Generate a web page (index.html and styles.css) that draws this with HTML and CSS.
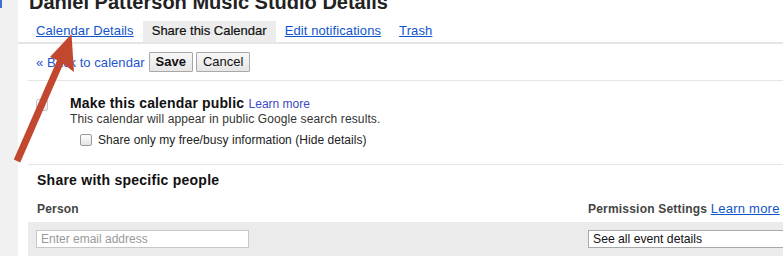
FILE: index.html
```html
<!DOCTYPE html>
<html>
<head>
<meta charset="utf-8">
<link rel="stylesheet" href="styles.css">
</head>
<body>
<div class="page">
  <div class="sidebar"><div class="sidebar-mark"></div></div>
  <div class="main">
    <h1 class="title">Daniel Patterson Music Studio Details</h1>
    <div class="tabs">
      <a class="tab" href="#">Calendar Details</a>
      <span class="tab tab-active">Share this Calendar</span>
      <a class="tab" href="#">Edit notifications</a>
      <a class="tab" href="#">Trash</a>
    </div>
    <div class="actions">
      <a class="back" href="#">« Back to calendar</a>
      <button class="btn btn-save">Save</button>
      <button class="btn">Cancel</button>
    </div>
    <div class="public">
      <input type="checkbox" class="cb cb-disabled" disabled>
      <div class="public-text">
        <div class="public-title"><span class="strong">Make this calendar public</span> <a class="learn" href="#">Learn more</a></div>
        <div class="public-desc">This calendar will appear in public Google search results.</div>
        <label class="freebusy"><input type="checkbox" class="cb"><span>Share only my free/busy information (Hide details)</span></label>
      </div>
    </div>
    <div class="people">
      <div class="people-title">Share with specific people</div>
      <div class="grid grid-head">
        <div class="col-label">Person</div>
        <div class="col-label">Permission Settings <a class="learn2" href="#">Learn more</a></div>
      </div>
      <div class="grid grid-row">
        <div><input class="email" type="text" placeholder="Enter email address"></div>
        <div><div class="select">See all event details</div></div>
      </div>
    </div>
  </div>
</div>
<svg class="arrow" width="783" height="256" viewBox="0 0 783 256">
  <line x1="17" y1="161" x2="62" y2="58" stroke="#c1472f" stroke-width="7"/>
  <polygon points="71.5,34 74,72 61,62 50,57" fill="#c1472f"/>
</svg>
</body>
</html>
```
FILE: styles.css
```css
html, body {
  margin: 0;
  padding: 0;
  background: #fff;
  overflow: hidden;
}
body {
  width: 783px;
  height: 256px;
  position: relative;
  font-family: "Liberation Sans", Arial, sans-serif;
  color: #222;
}
.page {
  display: flex;
  min-height: 256px;
}
.sidebar {
  width: 18px;
  flex: none;
  background: #f1f1f1;
}
.sidebar-mark {
  width: 2px;
  height: 8px;
  background: #3b6fd4;
}
.main {
  flex: 1;
  min-width: 0;
}
.title {
  margin: -8px 0 9px 11px;
  font-size: 20px;
  line-height: 20px;
  font-weight: bold;
  color: #222;
  white-space: nowrap;
}
.tabs {
  display: flex;
  padding-left: 9px;
  border-bottom: 2px solid #e5e5e5;
  height: 21px;
}
.tab {
  font-size: 13px;
  line-height: 19px;
  padding: 0 9px 2px;
  color: #1155cc;
  text-decoration: underline;
  white-space: nowrap;
  letter-spacing: 0.1px;
}
.tab-active {
  background: #ececec;
  color: #111;
  text-decoration: none;
  letter-spacing: 0;
  -webkit-text-stroke: 0.2px #111;
}
.actions {
  display: flex;
  align-items: center;
  margin-left: 10px;
  padding: 8px 0 8px 8px;
  border-bottom: 1px solid #e5e5e5;
}
.back {
  font-size: 13px;
  color: #1f55cf;
  text-decoration: none;
  margin-right: 4px;
  letter-spacing: 0.05px;
}
.btn {
  height: 20px;
  box-sizing: border-box;
  border: 1px solid #a8a8a8;
  border-radius: 1px;
  background: linear-gradient(#f7f7f7, #e6e6e6);
  font-family: "Liberation Sans", Arial, sans-serif;
  font-size: 13px;
  color: #111;
  padding: 0 6px;
  margin-right: 3px;
  line-height: 18px;
}
.btn-save {
  font-weight: bold;
}
.public {
  display: flex;
  align-items: flex-start;
  margin-left: 10px;
  padding: 14px 0 17px 8px;
  border-bottom: 1px solid #e5e5e5;
}
.cb {
  appearance: none;
  -webkit-appearance: none;
  width: 12px;
  height: 12px;
  margin: 0;
  box-sizing: border-box;
  border: 1px solid #9a9a9a;
  border-radius: 2px;
  background: linear-gradient(#fdfdfd, #e4e4e4);
  flex: none;
}
.cb-disabled {
  margin-top: 4px;
  border-color: #c8c8c8;
  background: linear-gradient(#f8f8f8, #ececec);
}
.public-text {
  margin-left: 22px;
}
.public-title {
  line-height: 16px;
}
.strong {
  font-size: 14px;
  font-weight: bold;
  color: #111;
  letter-spacing: 0.15px;
}
.learn {
  font-size: 12px;
  color: #3b4bc5;
  text-decoration: none;
}
.public-desc {
  font-size: 12px;
  line-height: 14px;
  color: #333;
  letter-spacing: 0.12px;
}
.freebusy {
  display: flex;
  align-items: center;
  margin: 7px 0 0 10px;
  font-size: 12px;
  line-height: 14px;
  color: #222;
  letter-spacing: 0.05px;
}
.freebusy span {
  margin-left: 6px;
}
.people {
  margin-left: 10px;
}
.people-title {
  padding: 7px 0 0 9px;
  font-size: 14px;
  line-height: 16px;
  font-weight: bold;
  color: #111;
  letter-spacing: 0.25px;
}
.grid {
  display: grid;
  grid-template-columns: 552px 1fr;
  padding-left: 8px;
}
.grid-head {
  margin-top: 14px;
  height: 20px;
}
.col-label {
  font-size: 12px;
  line-height: 14px;
  font-weight: bold;
  color: #444;
  white-space: nowrap;
  letter-spacing: 0.2px;
}
.grid-head .col-label:first-child {
  padding-left: 1px;
}
.learn2 {
  font-size: 13px;
  font-weight: normal;
  color: #1155cc;
  text-decoration: underline;
  letter-spacing: 0.25px;
}
.grid-row {
  background: #ebebeb;
  padding-top: 8px;
  height: 34px;
  box-sizing: border-box;
}
.email {
  width: 213px;
  height: 18px;
  box-sizing: border-box;
  border: 1px solid #c8c8c8;
  background: #fff;
  margin: 0;
  padding: 0 0 0 4px;
  font-family: "Liberation Sans", Arial, sans-serif;
  font-size: 12px;
  outline: none;
  display: block;
}
.email::placeholder {
  color: #999;
}
.select {
  width: 230px;
  height: 18px;
  box-sizing: border-box;
  border: 1px solid #a9a9a9;
  background: #fff;
  padding-left: 4px;
  font-size: 12.2px;
  line-height: 16px;
  color: #111;
  white-space: nowrap;
}
.arrow {
  position: absolute;
  left: 0;
  top: 0;
  pointer-events: none;
}
```
